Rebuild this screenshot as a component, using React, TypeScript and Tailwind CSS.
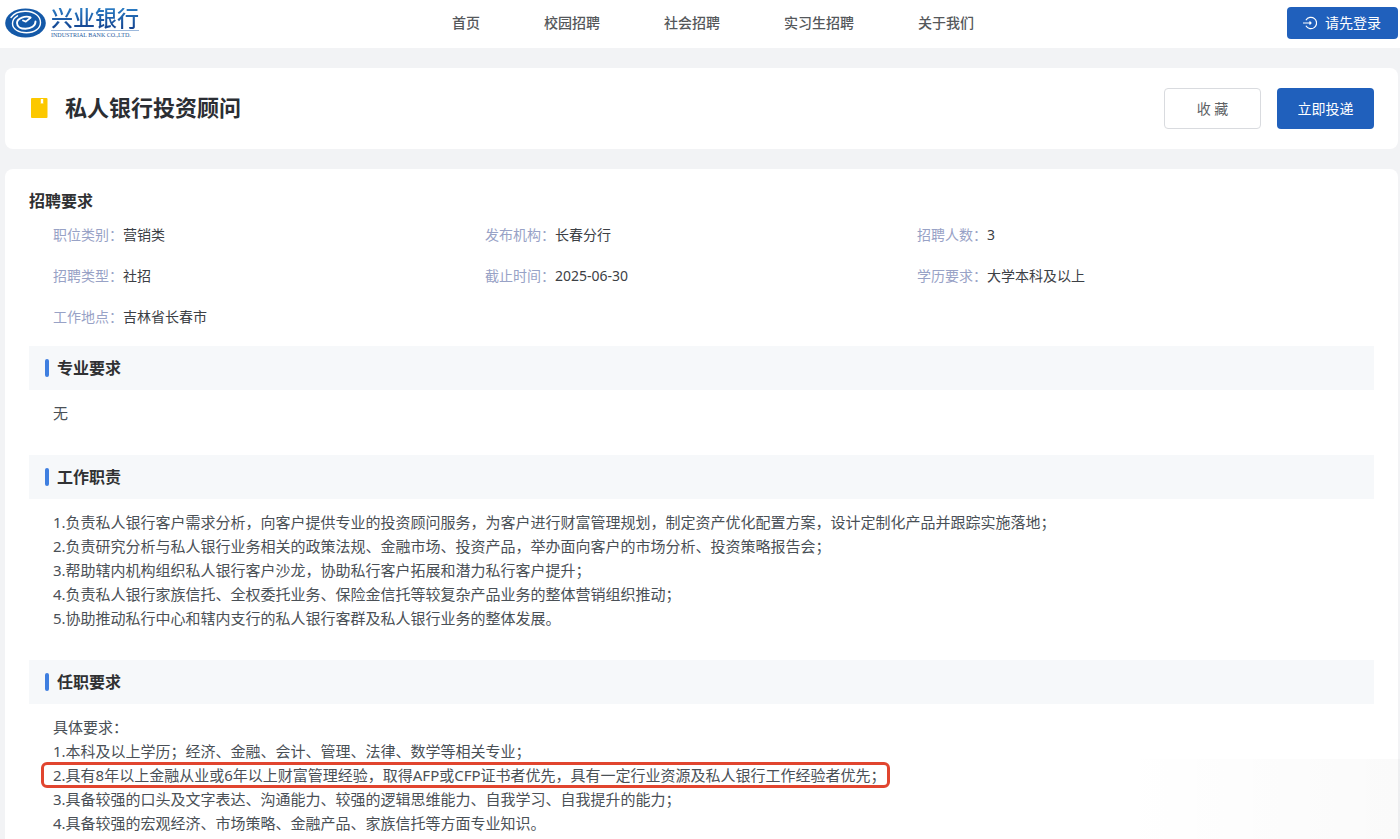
import React from "react";

const navItems = ["首页", "校园招聘", "社会招聘", "实习生招聘", "关于我们"];

const facts = [
  ["职位类别：", "营销类"],
  ["发布机构：", "长春分行"],
  ["招聘人数：", "3"],
  ["招聘类型：", "社招"],
  ["截止时间：", "2025-06-30"],
  ["学历要求：", "大学本科及以上"],
  ["工作地点：", "吉林省长春市"],
];

const duties = [
  "1.负责私人银行客户需求分析，向客户提供专业的投资顾问服务，为客户进行财富管理规划，制定资产优化配置方案，设计定制化产品并跟踪实施落地；",
  "2.负责研究分析与私人银行业务相关的政策法规、金融市场、投资产品，举办面向客户的市场分析、投资策略报告会；",
  "3.帮助辖内机构组织私人银行客户沙龙，协助私行客户拓展和潜力私行客户提升；",
  "4.负责私人银行家族信托、全权委托业务、保险金信托等较复杂产品业务的整体营销组织推动；",
  "5.协助推动私行中心和辖内支行的私人银行客群及私人银行业务的整体发展。",
];

const requirements = [
  "具体要求：",
  "1.本科及以上学历；经济、金融、会计、管理、法律、数学等相关专业；",
  "2.具有8年以上金融从业或6年以上财富管理经验，取得AFP或CFP证书者优先，具有一定行业资源及私人银行工作经验者优先；",
  "3.具备较强的口头及文字表达、沟通能力、较强的逻辑思维能力、自我学习、自我提升的能力；",
  "4.具备较强的宏观经济、市场策略、金融产品、家族信托等方面专业知识。",
];

function Logo() {
  return (
    <a href="#" className="flex items-center gap-[5px]">
      <svg width="41" height="30" viewBox="0 0 41 30" aria-hidden="true">
        <ellipse cx="20.5" cy="15" rx="20.3" ry="14.5" fill="#1459a8" />
        <g fill="none" stroke="#fff" strokeLinecap="round" strokeLinejoin="round">
          <path
            d="M6 9.500 C9 5 15 3 21 3.200 C30 3.500 35.500 8.500 35.500 14.500 C35.500 20.500 29.500 24.800 21.500 24.800 C13.500 24.800 7.500 21 7.500 15.500 C7.500 12 9.500 9.500 12.500 7.800"
            strokeWidth="1.400"
          />
          <path
            d="M25.500 9.300 C20.500 7.500 12 10 12 15 C12 18.800 16 20.800 20.500 20.800 C26 20.800 30.500 18 30.500 13.500"
            strokeWidth="1.900"
          />
          <path d="M18 12.500 L20.800 13.600 L25.500 9.800" strokeWidth="1.800" />
        </g>
      </svg>
      <span className="flex flex-col">
        <span className="border-b border-[#9db9dc] bg-linear-to-b from-[#2b7cc4] to-[#123f8c] bg-clip-text font-['Liberation_Sans','Noto_Sans_CJK_SC',sans-serif] text-[22px] leading-[22px] font-medium text-transparent">
          兴业银行
        </span>
        <span className="mt-px font-['Liberation_Serif',serif] text-[6px] leading-[7px] whitespace-nowrap text-[#2a5ba0]">
          INDUSTRIAL BANK CO.,LTD.
        </span>
      </span>
    </a>
  );
}

function Section({ title, lines, marked }: { title: string; lines: string[]; marked?: number }) {
  return (
    <section className="pb-[30px] last:pb-0">
      <div className="flex h-11 items-center gap-2 bg-[#f6f8fa] pl-4">
        <span className="h-[18px] w-1 rounded-sm bg-[#3f7fe0]" />
        <h2 className="text-base leading-6 font-bold text-[#303133]">{title}</h2>
      </div>
      <div className="px-6 pt-[11px] text-[15px] leading-6 text-[#4a5056]">
        {lines.map((line, i) => (
          <p key={line} className="relative w-fit">
            {line}
            {i === marked && (
              <span className="absolute -inset-y-px -right-1 -left-3 rounded-md border-3 border-[#e1452f]" />
            )}
          </p>
        ))}
      </div>
    </section>
  );
}

export default function App() {
  return (
    <div
      lang="zh-CN"
      className="relative flex min-h-screen flex-col bg-[#f2f3f5] font-['Noto_Sans','Noto_Sans_CJK_SC',sans-serif] text-sm text-[#303133]"
    >
      <header className="flex h-12 items-center justify-between bg-white pr-0.5 pb-0.5 pl-[5px]">
        <Logo />
        <nav className="flex gap-16 font-medium text-[#55585b]">
          {navItems.map((item) => (
            <a key={item} href="#">
              {item}
            </a>
          ))}
        </nav>
        <button className="flex h-8 items-center gap-2 rounded-sm bg-[#2060bc] pr-[17px] pl-4 text-white">
          <svg width="14" height="14" viewBox="0 0 14 14" fill="none" stroke="currentColor" strokeWidth="1.200" aria-hidden="true">
            <path d="M2.900 4.200 A5.700 5.700 0 1 1 2.900 9.800 M0 7 H8 M6.500 5.500 L8 7 L6.500 8.500" />
          </svg>
          请先登录
        </button>
      </header>

      <main className="flex grow flex-col gap-5 pt-5 pr-0.5 pl-[5px]">
        <div className="flex items-center rounded-lg bg-white px-6 py-5">
          <svg width="18" height="22" viewBox="0 0 18 22" className="ml-0.5" aria-hidden="true">
            <rect width="16.500" height="20" rx="1" fill="#fcc800" />
            <path d="M9.800 1 h2.400 v5 l-1.200 -1 l-1.200 1 z" fill="#fff" />
          </svg>
          <h1 className="ml-4 grow pb-1 text-[22px] leading-8 font-bold text-[#2b2e33]">私人银行投资顾问</h1>
          <div className="flex gap-4">
            <button className="h-[41px] w-[97px] rounded-sm border border-[#d9dbdf] bg-white text-[#606266]">
              收 藏
            </button>
            <button className="h-[41px] w-[97px] rounded-sm bg-[#2060bc] text-white">立即投递</button>
          </div>
        </div>

        <div className="grow rounded-t-lg bg-white px-6 pt-5">
          <h2 className="text-base leading-6 font-bold text-[#303133]">招聘要求</h2>
          <dl className="grid grid-cols-[432px_432px_1fr] gap-y-[21px] pt-3 pb-[19px] pl-6 leading-5">
            {facts.map(([label, value]) => (
              <div key={label} className="flex">
                <dt className="text-[#98a2c6]">{label}</dt>
                <dd className="text-[#3c4045]">{value}</dd>
              </div>
            ))}
          </dl>
          <Section title="专业要求" lines={["无"]} />
          <Section title="工作职责" lines={duties} />
          <Section title="任职要求" lines={requirements} marked={2} />
        </div>
      </main>
      <div className="pointer-events-none absolute right-0 bottom-0 h-20 w-72 bg-linear-to-r from-transparent to-black/2" />
    </div>
  );
}
